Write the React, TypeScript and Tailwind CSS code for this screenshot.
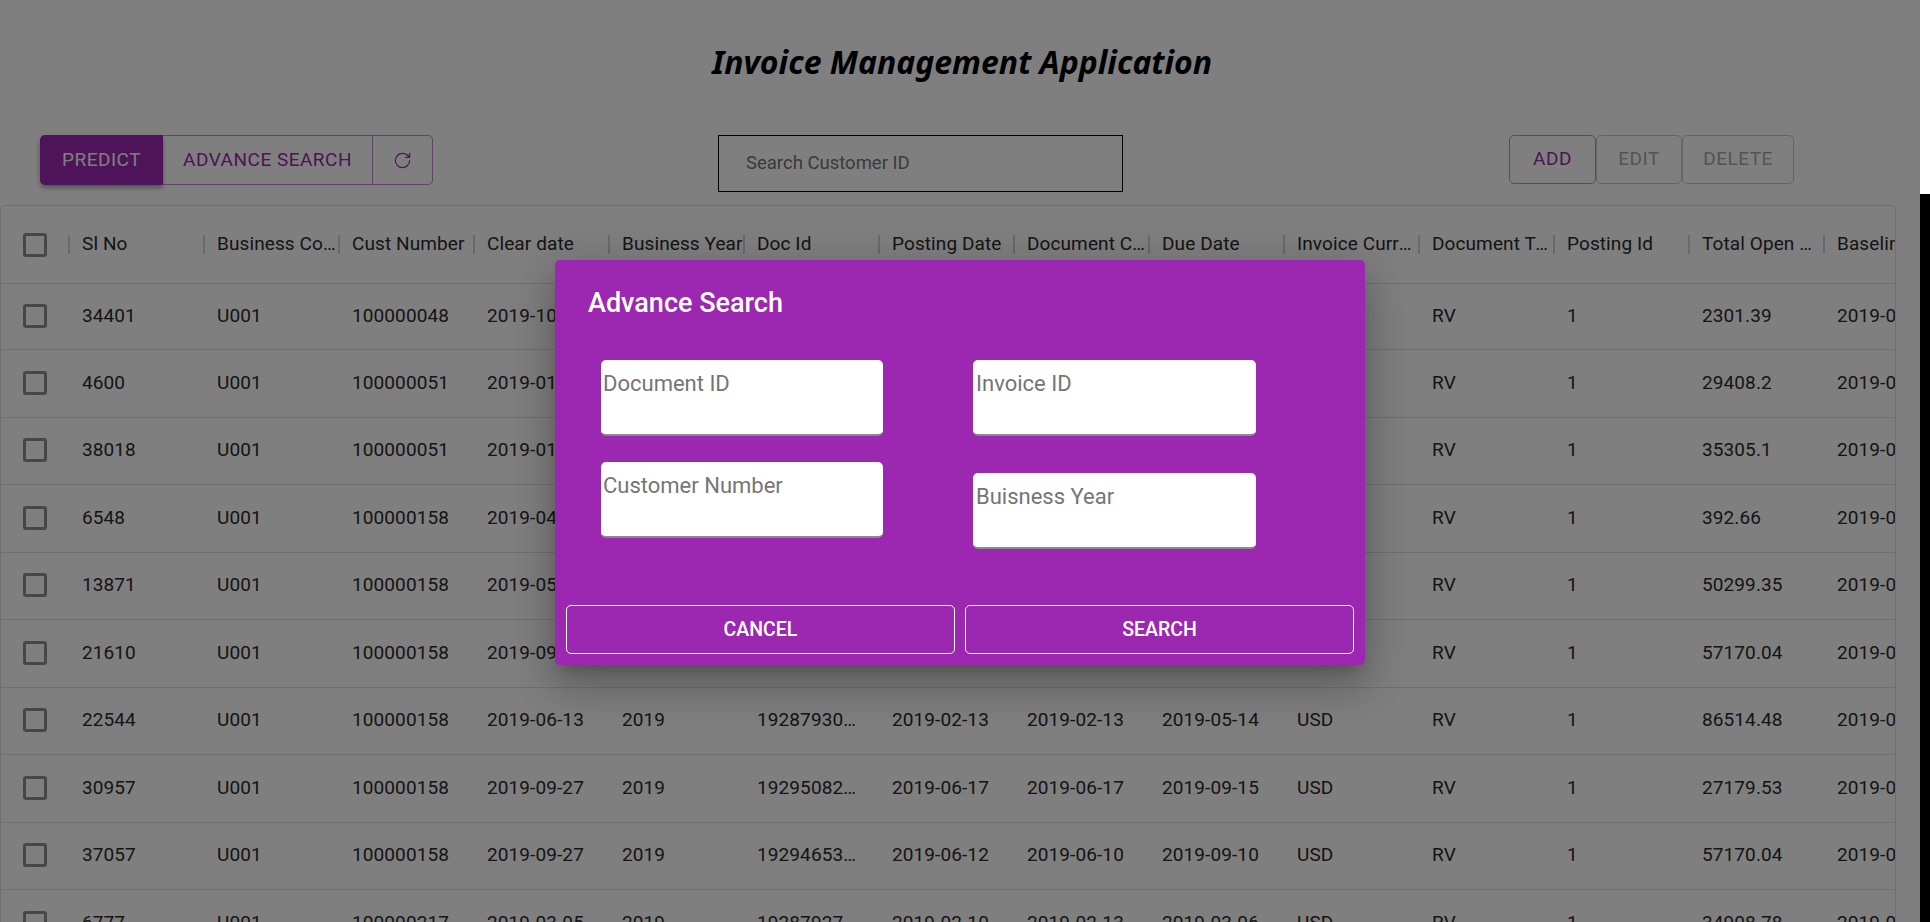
import { RotateCw } from "lucide-react";

const font = "font-['Roboto',sans-serif]";

const columns = [
  "Sl No",
  "Business Code",
  "Cust Number",
  "Clear date",
  "Business Year",
  "Doc Id",
  "Posting Date",
  "Document Create Date",
  "Due Date",
  "Invoice Currency",
  "Document Type",
  "Posting Id",
  "Total Open Amount",
  "Baseline Date",
];

const rows = [
  ["34401", "U001", "100000048", "2019-10-24", "2019", "1929981234", "2019-10-09", "2019-10-09", "2019-10-24", "USD", "RV", "1", "2301.39", "2019-09-24"],
  ["4600", "U001", "100000051", "2019-01-15", "2019", "1928541765", "2019-01-01", "2019-01-01", "2019-01-16", "USD", "RV", "1", "29408.2", "2019-01-01"],
  ["38018", "U001", "100000051", "2019-01-29", "2019", "1928632010", "2019-01-14", "2019-01-14", "2019-01-29", "USD", "RV", "1", "35305.1", "2019-01-14"],
  ["6548", "U001", "100000158", "2019-04-12", "2019", "1929031877", "2019-03-13", "2019-03-13", "2019-04-12", "USD", "RV", "1", "392.66", "2019-03-13"],
  ["13871", "U001", "100000158", "2019-05-20", "2019", "1929205534", "2019-04-20", "2019-04-20", "2019-05-20", "USD", "RV", "1", "50299.35", "2019-04-20"],
  ["21610", "U001", "100000158", "2019-09-03", "2019", "1929671242", "2019-08-04", "2019-08-04", "2019-09-03", "USD", "RV", "1", "57170.04", "2019-08-04"],
  ["22544", "U001", "100000158", "2019-06-13", "2019", "1928793012", "2019-02-13", "2019-02-13", "2019-05-14", "USD", "RV", "1", "86514.48", "2019-02-13"],
  ["30957", "U001", "100000158", "2019-09-27", "2019", "1929508233", "2019-06-17", "2019-06-17", "2019-09-15", "USD", "RV", "1", "27179.53", "2019-06-17"],
  ["37057", "U001", "100000158", "2019-09-27", "2019", "1929465310", "2019-06-12", "2019-06-10", "2019-09-10", "USD", "RV", "1", "57170.04", "2019-06-12"],
  ["6777", "U001", "100000217", "2019-03-05", "2019", "1928792744", "2019-02-10", "2019-02-13", "2019-03-06", "USD", "RV", "1", "34908.78", "2019-02-10"],
];

function Checkbox() {
  return <span className="block h-[24px] w-[24px] rounded-[3px] border-[3px] border-[#8f8f8f] bg-white" />;
}

function Field({ label, className }: { label: string; className?: string }) {
  return (
    <div className={`h-[76px] rounded-[5px] border-b-2 border-[#8a8a8a] bg-white pt-[10px] text-[22px] leading-[28px] text-[#757575] ${className ?? ""}`}>
      {label}
    </div>
  );
}

export default function App() {
  return (
    <div className={`relative flex h-[922px] w-[1930px] overflow-hidden bg-white ${font}`}>
      <div className="relative h-full w-[1920px] shrink-0 overflow-hidden bg-white">
        <h1 className="pl-[4px] pt-[41px] text-center font-['Noto_Sans',sans-serif] text-[32px] font-bold italic leading-[42px] text-black">
          Invoice Management Application
        </h1>

        <div className="mt-[52px] flex h-[57px] items-start pl-[40px] pr-[126px]">
          <div className="flex h-[50px] w-[393px] text-[19px] tracking-[0.5px]">
            <div className="flex w-[123px] items-center justify-center rounded-l-[5px] bg-[#9c27b0] text-white shadow-[0_3px_5px_rgba(0,0,0,0.35)]">PREDICT</div>
            <div className="flex w-[210px] items-center justify-center border-y border-r border-[#c58ad0] text-[#9c27b0]">ADVANCE SEARCH</div>
            <div className="flex w-[60px] items-center justify-center rounded-r-[5px] border-y border-r border-[#c58ad0] text-[#9c27b0]">
              <RotateCw size={19} strokeWidth={1.5} />
            </div>
          </div>
          <div className="ml-[285px] flex h-[57px] w-[405px] items-center border border-black pl-[27px] text-[18.5px] text-[#757575]">
            Search Customer ID
          </div>
          <div className="ml-auto flex h-[49px] text-[19px] tracking-[0.5px]">
            <div className="flex w-[87px] items-center justify-center rounded-[5px] border border-[#c58ad0] text-[#9c27b0]">ADD</div>
            <div className="flex w-[86px] items-center justify-center rounded-[5px] border border-[#c9c9c9] text-[#a8a8a8]">EDIT</div>
            <div className="flex w-[112px] items-center justify-center rounded-[5px] border border-[#c9c9c9] text-[#a8a8a8]">DELETE</div>
          </div>
        </div>

        <div className="mt-[13px] h-[760px] w-[1896px] overflow-hidden rounded-[5px] border border-[#e0e0e0]">
          <div className="flex h-[78px] items-center border-b border-[#e0e0e0] text-[19px] tracking-[0.1px] text-[#2a2a2a]">
            <div className="flex w-[67px] shrink-0 items-center pl-[22px]">
              <Checkbox />
            </div>
            {columns.map((c) => (
              <div key={c} className="flex w-[135px] shrink-0 items-center">
                <span className="h-[19px] w-[2px] shrink-0 bg-[#d4d4d4]" />
                <span className="min-w-0 flex-1 truncate pl-[12px]">{c}</span>
              </div>
            ))}
          </div>
          {rows.map((r) => (
            <div key={r[0]} className="flex h-[67.5px] items-center border-b border-[#e0e0e0] pb-[1px] text-[19px] tracking-[0.1px] text-[#2a2a2a] [&:nth-child(2)]:h-[66px]">
              <div className="flex w-[68px] shrink-0 items-center pl-[22px]">
                <Checkbox />
              </div>
              {r.map((v, i) => (
                <div key={i} className="w-[135px] shrink-0 truncate pl-[13px] pr-[18px] last:overflow-visible last:pr-0">{v}</div>
              ))}
            </div>
          ))}
        </div>

        <div className="absolute inset-0 bg-black/50" />

        <div className="absolute left-[555px] top-[260px] h-[405px] w-[810px] rounded-[5px] bg-[#9c27b0] text-white shadow-[0_11px_15px_-7px_rgba(0,0,0,0.2),0_24px_38px_3px_rgba(0,0,0,0.14),0_9px_46px_8px_rgba(0,0,0,0.12)]">
          <h2 className="pl-[33px] pt-[26px] text-[27px] font-medium leading-[34px]">Advance Search</h2>
          <div className="mt-[40px] flex gap-[90px] pl-[46px]">
            <div className="flex w-[282px] flex-col gap-[26px]">
              <Field label="Document ID" className="pl-[2px]" />
              <Field label="Customer Number" className="pl-[2px]" />
            </div>
            <div className="flex w-[283px] flex-col gap-[37px]">
              <Field label="Invoice ID" className="pl-[3px]" />
              <Field label="Buisness Year" className="pl-[3px]" />
            </div>
          </div>
          <div className="absolute inset-x-[11px] bottom-[11px] flex gap-[10px]">
            <div className="flex h-[49px] flex-1 items-center justify-center rounded-[5px] border border-white text-[19.5px] font-medium">CANCEL</div>
            <div className="flex h-[49px] flex-1 items-center justify-center rounded-[5px] border border-white text-[19.5px] font-medium">SEARCH</div>
          </div>
        </div>
      </div>

      <div className="flex w-[10px] shrink-0 flex-col">
        <div className="h-[194px] bg-white" />
        <div className="flex-1 bg-black" />
      </div>
    </div>
  );
}
